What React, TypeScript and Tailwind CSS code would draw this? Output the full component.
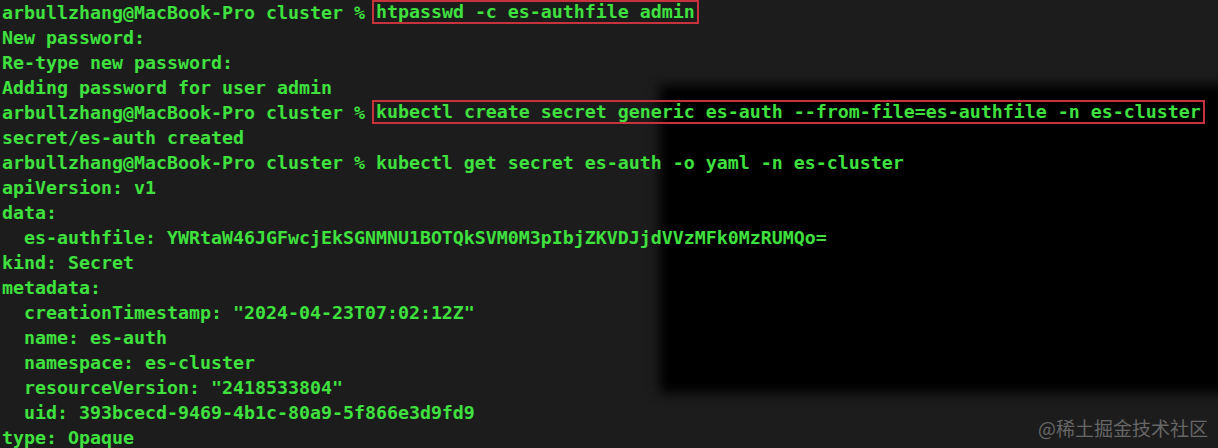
const lines: { text: string; boxed?: string }[] = [
  { text: "arbullzhang@MacBook-Pro cluster % ", boxed: "htpasswd -c es-authfile admin" },
  { text: "New password:" },
  { text: "Re-type new password:" },
  { text: "Adding password for user admin" },
  {
    text: "arbullzhang@MacBook-Pro cluster % ",
    boxed: "kubectl create secret generic es-auth --from-file=es-authfile -n es-cluster",
  },
  { text: "secret/es-auth created" },
  { text: "arbullzhang@MacBook-Pro cluster % kubectl get secret es-auth -o yaml -n es-cluster" },
  { text: "apiVersion: v1" },
  { text: "data:" },
  { text: "  es-authfile: YWRtaW46JGFwcjEkSGNMNU1BOTQkSVM0M3pIbjZKVDJjdVVzMFk0MzRUMQo=" },
  { text: "kind: Secret" },
  { text: "metadata:" },
  { text: '  creationTimestamp: "2024-04-23T07:02:12Z"' },
  { text: "  name: es-auth" },
  { text: "  namespace: es-cluster" },
  { text: '  resourceVersion: "2418533804"' },
  { text: "  uid: 393bcecd-9469-4b1c-80a9-5f866e3d9fd9" },
  { text: "type: Opaque" },
];

export default function App() {
  return (
    <div className="relative w-[1218px] h-[448px] overflow-hidden bg-[#1c1c1c]">
      {/* dark ghost window behind the output */}
      <div className="absolute left-[660px] top-[85px] right-[-20px] bottom-[55px] bg-black blur-[6px]" />

      <div className="relative flex flex-col pl-[2px] font-['DejaVu_Sans_Mono',monospace] font-bold text-[18.27px] leading-[25px] text-[#3fe13f] whitespace-pre">
        {lines.map((l, i) => (
          <div key={i} className="h-[25px]">
            {l.text}
            {l.boxed && (
              <span className="inline-block ml-[-4px] px-[2px] border-2 border-[#c8323c] leading-[20px] align-[1px]">
                {l.boxed}
              </span>
            )}
          </div>
        ))}
      </div>

      <div className="absolute right-[10px] bottom-[6px] text-[19px] text-[#666666] font-['Noto_Sans_CJK_SC',sans-serif]">
        @稀土掘金技术社区
      </div>
    </div>
  );
}
